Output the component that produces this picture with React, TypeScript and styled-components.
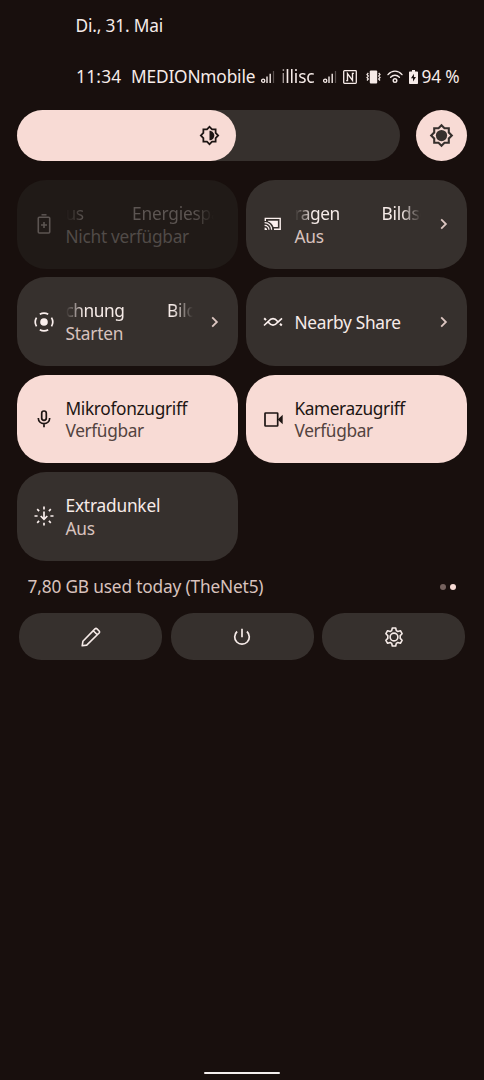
import React from 'react';
import styled, { createGlobalStyle, css } from 'styled-components';

const Global = createGlobalStyle`
  * { box-sizing: border-box; }
  html, body { margin: 0; background: #180f0d; }
  svg { display: block; flex: none; }
`;

const Screen = styled.main`
  width: 484px;
  height: 1080px;
  background: #180f0d;
  color: #f6ebe8;
  font: 400 17.3px/23px 'Noto Sans', 'Open Sans', sans-serif;
  letter-spacing: -0.17px;
  display: flex;
  flex-direction: column;
  overflow: hidden;
  white-space: nowrap;
`;

const DateLine = styled.div`
  padding: 14px 0 0 75.5px;
  height: 65px;
`;

const StatusBar = styled.div`
  display: flex;
  align-items: center;
  height: 23px;
  padding-left: 76px;
`;

const Clock = styled.span`
  width: 55px;
  letter-spacing: 0.25px;
`;

const Carrier = styled.span<{ $width: number; $faded?: boolean }>`
  width: ${p => p.$width}px;
  ${p => p.$faded && css`
    mask-image: linear-gradient(to right, transparent, #000 4px);
  `}
`;

const StatusIcon = styled.span<{ $gap: number }>`
  margin-right: ${p => p.$gap}px;
`;

const BrightnessRow = styled.div`
  display: flex;
  justify-content: space-between;
  margin: 21.5px 17px 0 17px;
  height: 51px;
`;

const SliderTrack = styled.div`
  width: 382.5px;
  border-radius: 26px;
  background: #36302d;
`;

const SliderFill = styled.div`
  width: 218.5px;
  height: 51px;
  border-radius: 26px;
  background: #f8dbd5;
  color: #1d1513;
  display: flex;
  align-items: center;
  justify-content: flex-end;
  padding-right: 15.5px;
`;

const AutoButton = styled.div`
  width: 51px;
  height: 51px;
  border-radius: 50%;
  background: #f8dbd5;
  color: #36302d;
  display: grid;
  place-items: center;
`;

const Tiles = styled.section`
  display: grid;
  grid-template-columns: 221px 221px;
  grid-auto-rows: 88.8px;
  gap: 8.6px 8px;
  margin: 19.4px 0 0 17px;
`;

type Tone = 'off' | 'on' | 'disabled';

const tones = {
  off: { bg: '#36302d', title: '#f6ebe8', sub: '#d8c2bd', icon: '#fbf0ee' },
  on: { bg: '#f8dbd5', title: '#1d1513', sub: '#53433f', icon: '#1d1513' },
  disabled: { bg: '#201a17', title: '#5c5552', sub: '#514b48', icon: '#5c5552' },
};

const TileBox = styled.article<{ $tone: Tone }>`
  display: flex;
  align-items: center;
  border-radius: 29px;
  padding: 0 16px 0 15.5px;
  background: ${p => tones[p.$tone].bg};
  color: ${p => tones[p.$tone].icon};
`;

const IconSlot = styled.div`
  width: 23px;
  display: grid;
  place-items: center;
  margin-right: 10px;
`;

const Texts = styled.div`
  flex: 1;
  min-width: 0;
  line-height: 22.8px;
  padding-top: 2.6px;
`;

const Title = styled.div<{ $tone: Tone; $spacing?: number }>`
  color: ${p => tones[p.$tone].title};
  letter-spacing: ${p => p.$spacing ?? -0.2}px;
`;

const Subtitle = styled.div<{ $tone: Tone; $spacing?: number }>`
  color: ${p => tones[p.$tone].sub};
  letter-spacing: ${p => p.$spacing ?? -0.2}px;
`;

const Marquee = styled.div<{ $tone: Tone; $width: number }>`
  display: flex;
  width: ${p => p.$width}px;
  overflow: hidden;
  letter-spacing: -0.45px;
  color: ${p => tones[p.$tone].title};
  mask-image: linear-gradient(to right, transparent, #000 18px, #000 calc(100% - 20px), transparent);
`;

const MarqueeTail = styled.span<{ $width: number }>`
  flex: none;
  width: ${p => p.$width}px;
`;

const MarqueeHead = styled.span`
  letter-spacing: -0.2px;
`;

const UsageRow = styled.div`
  display: flex;
  align-items: center;
  justify-content: space-between;
  height: 52.2px;
  padding: 0 28px 0 27.5px;
  color: #d8c2bd;
`;

const Dots = styled.div`
  display: flex;
  gap: 4px;
`;

const Dot = styled.i<{ $active?: boolean }>`
  width: 6px;
  height: 6px;
  border-radius: 50%;
  background: ${p => (p.$active ? '#f8dbd5' : '#75625e')};
`;

const Actions = styled.div`
  display: grid;
  grid-template-columns: repeat(3, 143px);
  gap: 8.5px;
  padding-left: 19px;
  height: 47px;
`;

const Action = styled.div`
  display: grid;
  place-items: center;
  border-radius: 22.5px;
  background: #36302d;
`;

const HomeBar = styled.div`
  width: 76px;
  height: 2px;
  margin: auto auto 6px;
  border-radius: 1px;
  background: #f4efed;
`;

const GEAR = 'M20 8.69V4h-4.69L12 .69 8.69 4H4v4.69L.69 12 4 15.31V20h4.69L12 23.31 15.31 20H20v-4.69L23.31 12 20 8.69zm-2 5.79V18h-3.52L12 20.48 9.52 18H6v-3.52L3.52 12 6 9.52V6h3.52L12 3.52 14.48 6H18v3.52L20.48 12 18 14.48z';

const Signal = () => (
  <svg width="14" height="14" viewBox="0 0 14 14" fill="none" stroke="currentColor">
    <circle cx="2.2" cy="10.7" r="1.6" strokeWidth="1.3" />
    <path d="M6 6.5V13M9.2 3.8V13" strokeWidth="1.4" />
    <path d="M12.5 1V13" strokeWidth="1.2" opacity=".3" />
  </svg>
);

const Nfc = () => (
  <svg width="14" height="14" viewBox="0 0 14 14" fill="none" stroke="currentColor">
    <rect x=".7" y=".7" width="12.6" height="12.6" rx=".8" strokeWidth="1.3" />
    <path d="M3.2 10.6H4.500V3.600L9.500 10.300V3.400H10.900" strokeWidth="1.400" />
  </svg>
);

const Vibrate = () => (
  <svg width="15" height="14" viewBox="0 0 15 14" fill="none" stroke="currentColor">
    <rect x="3.8" y=".6" width="7.4" height="12.8" rx="1" fill="currentColor" stroke="none" />
    <path d="M2.3 3 1 4.5 2.3 6 1 7.5 2.3 9 1 10.5M12.7 3 14 4.5 12.7 6 14 7.5 12.7 9 14 10.5" strokeWidth="1.2" />
  </svg>
);

const Wifi = () => (
  <svg width="16" height="14" viewBox="0 0 16 14" fill="none" stroke="currentColor" strokeWidth="1.4" strokeLinecap="round">
    <path d="M1 4.6C5-.1 11-.1 15 4.6M3.6 7.3c2.6-2.7 6.2-2.7 8.8 0" />
    <circle cx="8" cy="10.6" r="1.8" />
  </svg>
);

const BatteryFull = () => (
  <svg width="9" height="14" viewBox="0 0 9 14">
    <path d="M3 0h3v1.5h2.2c.5 0 .8.3.8.8v10.9c0 .5-.3.8-.8.8H.8c-.5 0-.8-.3-.8-.8V2.3c0-.5.3-.8.8-.8H3z" fill="currentColor" />
    <path d="M4.9 3.7 2 8.3h2v3.3L7 7H4.9z" fill="#180f0d" />
  </svg>
);

const BatterySaver = () => (
  <svg width="14" height="20" viewBox="0 0 14 20" fill="none" stroke="currentColor">
    <path d="M4.5.8h5" strokeWidth="1.5" />
    <rect x="1.3" y="3.2" width="11.4" height="15.8" rx="1" strokeWidth="1.6" />
    <path d="M7 8v6M4 11h6" strokeWidth="1.6" />
  </svg>
);

const Cast = () => (
  <svg width="18" height="14" viewBox="0 0 18 14" fill="none" stroke="currentColor">
    <path d="M1.3 4V1.4h14.9v10.8H10" strokeWidth="1.4" />
    <path d="M4 3.8h9.9v6.1H9.5C8.5 7.3 6.5 5.3 4 4.5z" fill="currentColor" stroke="none" />
    <path d="M.6 5.7c4 0 7 3 7 7M.6 8.3c2.5 0 4.4 2 4.4 4.4" strokeWidth="1.2" />
    <path d="M.6 10.4V13h2.5c0-1.5-1-2.6-2.5-2.6z" fill="currentColor" stroke="none" />
  </svg>
);

const Recorder = () => (
  <svg width="20" height="20" viewBox="0 0 20 20" fill="none" stroke="currentColor" strokeWidth="1.7">
    <circle cx="10" cy="10" r="3.8" fill="currentColor" stroke="none" />
    <path d="M5.8 2.3a8.7 8.7 0 0 1 8.4 0M17.5 5.6a8.7 8.7 0 0 1 0 8.8M14.2 17.7a8.7 8.7 0 0 1-8.4 0M2.5 14.4a8.7 8.7 0 0 1 0-8.8" />
  </svg>
);

const Nearby = () => (
  <svg width="20" height="12" viewBox="0 0 20 12" fill="none" stroke="currentColor" strokeWidth="1.6">
    <path d="M1 9.5 5.6 5.2C8.2 1.7 11.8 1.7 14.4 5.2L15.6 6.4M4.4 5.4 5.6 6.6C8.2 10 11.8 10 14.4 6.6L19 2.300" />
    <path d="M1.200 2.300 3 4.100M17 7.700 18.800 9.500" strokeWidth="2" />
  </svg>
);

const Mic = () => (
  <svg width="14" height="18" viewBox="0 0 14 18" fill="none" stroke="currentColor" strokeWidth="1.7">
    <rect x="4.7" y="1" width="4.6" height="9.3" rx="2.3" />
    <path d="M1.3 8c0 7.500 11.400 7.500 11.400 0M7 13.700V17.300" />
  </svg>
);

const Camera = () => (
  <svg width="19" height="15" viewBox="0 0 19 15" fill="none" stroke="currentColor">
    <rect x="1" y="1" width="12.7" height="13" rx=".6" strokeWidth="1.7" />
    <path d="M13.700 7.500 18.700 2.700V12.300z" fill="currentColor" stroke="none" />
  </svg>
);

const ExtraDim = () => (
  <svg width="20" height="20" viewBox="0 0 20 20" fill="none" stroke="currentColor" strokeWidth="1.7">
    <path d="M10 .5V3.500M10 16.700V19.500M.5 10H3.600M16.400 10H19.500M3.200 3.200 5.100 5.100M16.800 3.200 14.900 5.100M3.200 16.800 5.100 14.900M16.800 16.800 14.900 14.900" />
    <path d="M10 5.500V13" />
    <path d="M6.700 10 10 13.300 13.300 10" />
  </svg>
);

const Chevron = () => (
  <svg width="14" height="14" viewBox="0 0 14 14" fill="none" stroke="#dcc6c1" strokeWidth="1.8">
    <path d="M4.2 2.300 8.900 7 4.200 11.700" />
  </svg>
);

const Pencil = () => (
  <svg width="20" height="20" viewBox="0 0 20 20" fill="none" stroke="currentColor" strokeWidth="1.6" strokeLinejoin="round">
    <path d="M1.2 18.8 1.9 14.3 14 1.9Q15 1 16 1.9L18.1 4Q19 5 18.1 6L5.7 18.1zM12.3 3.7 16.3 7.7" />
  </svg>
);

const Power = () => (
  <svg width="18" height="18" viewBox="0 0 18 18" fill="none" stroke="currentColor" strokeWidth="1.7">
    <path d="M9 .7V9.3M4.1 3.5a7.3 7.3 0 1 0 9.8 0" />
  </svg>
);

const Settings = () => (
  <svg width="20" height="20" viewBox="0 0 20 20" fill="none" stroke="currentColor" strokeWidth="1.6" strokeLinejoin="round">
    <circle cx="10" cy="10" r="3.9" />
    <path d="M8.3 1h3.4l.6 2.6 1.5.9 2.6-.8 1.700 3-1.900 1.900v2.800l1.900 1.900-1.700 3-2.600-.8-1.500.9-.6 2.600H8.300l-.6-2.600-1.500-.9-2.600.8-1.700-3 1.900-1.900V8.600L1.900 6.700l1.700-3 2.600.8 1.500-.9z" />
  </svg>
);

interface TileProps {
  tone?: Tone;
  icon: React.ReactNode;
  title?: string;
  titleSpacing?: number;
  marquee?: { tail: string; tailWidth: number; head: string; width: number };
  subtitle?: string;
  subSpacing?: number;
  chevron?: boolean;
}

const Tile = ({ tone = 'off', icon, title, titleSpacing, marquee, subtitle, subSpacing, chevron }: TileProps) => (
  <TileBox $tone={tone}>
    <IconSlot>{icon}</IconSlot>
    <Texts>
      {marquee ? (
        <Marquee $tone={tone} $width={marquee.width}>
          <MarqueeTail $width={marquee.tailWidth}>{marquee.tail}</MarqueeTail>
          <MarqueeHead>{marquee.head}</MarqueeHead>
        </Marquee>
      ) : (
        <Title $tone={tone} $spacing={titleSpacing}>{title}</Title>
      )}
      {subtitle && <Subtitle $tone={tone} $spacing={subSpacing}>{subtitle}</Subtitle>}
    </Texts>
    {chevron && <Chevron />}
  </TileBox>
);

export default function App() {
  return (
    <>
      <Global />
      <Screen>
        <DateLine>Di., 31. Mai</DateLine>
        <StatusBar>
          <Clock>11:34</Clock>
          <Carrier $width={130}>MEDIONmobile</Carrier>
          <StatusIcon $gap={6}><Signal /></StatusIcon>
          <Carrier $width={42} $faded>illisc</Carrier>
          <StatusIcon $gap={6}><Signal /></StatusIcon>
          <StatusIcon $gap={9}><Nfc /></StatusIcon>
          <StatusIcon $gap={6}><Vibrate /></StatusIcon>
          <StatusIcon $gap={6}><Wifi /></StatusIcon>
          <StatusIcon $gap={3.5}><BatteryFull /></StatusIcon>
          <span>94 %</span>
        </StatusBar>
        <BrightnessRow>
          <SliderTrack>
            <SliderFill>
              <svg width="21" height="21" viewBox="0 0 24 24" fill="currentColor">
                <path d={GEAR} />
                <path d="M12 6.5v11c3 0 5.5-2.5 5.5-5.5S15 6.5 12 6.5z" />
              </svg>
            </SliderFill>
          </SliderTrack>
          <AutoButton>
            <svg width="25" height="25" viewBox="0 0 24 24" fill="currentColor">
              <path d={GEAR} />
              <circle cx="12" cy="12" r="5.4" />
            </svg>
          </AutoButton>
        </BrightnessRow>
        <Tiles>
          <Tile
            tone="disabled"
            icon={<BatterySaver />}
            marquee={{ tail: 'us', tailWidth: 66.5, head: 'Energiespa', width: 148 }}
            subtitle="Nicht verfügbar"
            subSpacing={-0.28}
          />
          <Tile
            icon={<Cast />}
            marquee={{ tail: 'ragen', tailWidth: 87, head: 'Bildsc', width: 126 }}
            subtitle="Aus"
            chevron
          />
          <Tile
            icon={<Recorder />}
            marquee={{ tail: 'chnung', tailWidth: 101.5, head: 'Bilds', width: 127 }}
            subtitle="Starten"
            chevron
          />
          <Tile icon={<Nearby />} title="Nearby Share" titleSpacing={-0.3} chevron />
          <Tile tone="on" icon={<Mic />} title="Mikrofonzugriff" titleSpacing={-0.33} subtitle="Verfügbar" subSpacing={-0.38} />
          <Tile tone="on" icon={<Camera />} title="Kamerazugriff" titleSpacing={-0.42} subtitle="Verfügbar" subSpacing={-0.38} />
          <Tile icon={<ExtraDim />} title="Extradunkel" subtitle="Aus" />
        </Tiles>
        <UsageRow>
          <span>7,80 GB used today (TheNet5)</span>
          <Dots><Dot /><Dot $active /></Dots>
        </UsageRow>
        <Actions>
          <Action><Pencil /></Action>
          <Action><Power /></Action>
          <Action><Settings /></Action>
        </Actions>
        <HomeBar />
      </Screen>
    </>
  );
}
